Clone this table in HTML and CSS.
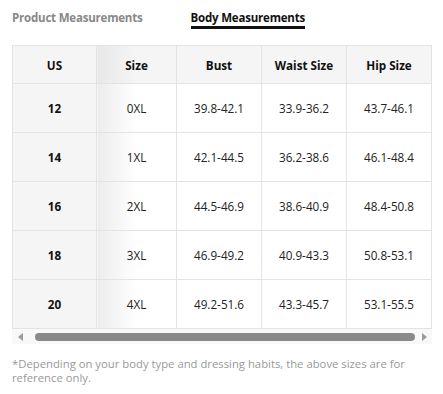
FILE: index.html
```html
<!DOCTYPE html>
<html lang="en">
<head>
    <meta charset="UTF-8">
    <title>Size Guide</title>
    <link rel="stylesheet" href="styles.css">
</head>
<body>
    <div class="tabs">
        <div class="tab">Product Measurements</div>
        <div class="tab active">Body Measurements</div>
    </div>

    <div class="table-wrap">
        <table class="size-table">
            <thead>
                <tr>
                    <th class="sticky">US</th>
                    <th class="shade">Size</th>
                    <th>Bust</th>
                    <th>Waist Size</th>
                    <th>Hip Size</th>
                </tr>
            </thead>
            <tbody>
                <tr><td class="sticky">12</td><td class="shade">0XL</td><td>39.8-42.1</td><td>33.9-36.2</td><td>43.7-46.1</td></tr>
                <tr><td class="sticky">14</td><td class="shade">1XL</td><td>42.1-44.5</td><td>36.2-38.6</td><td>46.1-48.4</td></tr>
                <tr><td class="sticky">16</td><td class="shade">2XL</td><td>44.5-46.9</td><td>38.6-40.9</td><td>48.4-50.8</td></tr>
                <tr><td class="sticky">18</td><td class="shade">3XL</td><td>46.9-49.2</td><td>40.9-43.3</td><td>50.8-53.1</td></tr>
                <tr><td class="sticky">20</td><td class="shade">4XL</td><td>49.2-51.6</td><td>43.3-45.7</td><td>53.1-55.5</td></tr>
            </tbody>
        </table>
        <div class="scrollbar">
            <span class="arrow left"></span>
            <span class="thumb"></span>
            <span class="arrow right"></span>
        </div>
    </div>

    <p class="note">*Depending on your body type and dressing habits, the above sizes are for reference only.</p>
</body>
</html>
```

FILE: styles.css
```css
* {
    margin: 0;
    padding: 0;
    box-sizing: border-box;
}

body {
    font-family: "Open Sans", "Noto Sans", sans-serif;
    background: #fff;
    color: #222;
    padding: 0 12px;
}

.tabs {
    display: flex;
    gap: 48px;
    padding-top: 10px;
    height: 45px;
}

.tab {
    font-size: 11.5px;
    font-weight: 700;
    color: #888;
    height: 19px;
    letter-spacing: -0.2px;
}

.tab.active {
    color: #111;
    border-bottom: 3px solid #111;
}

.table-wrap {
    width: 420px;
}

.size-table {
    width: 100%;
    border-collapse: collapse;
    table-layout: fixed;
    font-size: 11.7px;
}

.size-table th,
.size-table td {
    border: 1px solid #e3e3e3;
    text-align: center;
    font-weight: 400;
    color: #222;
}

.size-table th {
    height: 38px;
    font-weight: 700;
    color: #111;
    background: #f5f5f5;
}

.size-table td {
    height: 49px;
}

.size-table th:nth-child(1) { width: 84px; }
.size-table th:nth-child(2) { width: 80px; }

.size-table .sticky {
    background: #f5f5f5;
    font-weight: 700;
    color: #111;
}

.size-table td.shade {
    background: linear-gradient(to right, #ececec, #fff 50%);
}

.size-table th.shade {
    background: linear-gradient(to right, #e8e8e8, #f5f5f5 50%);
}

.scrollbar {
    display: flex;
    align-items: center;
    height: 15px;
    background: #f8f8f8;
    padding: 0 5px 0 6px;
}

.thumb {
    flex: 1;
    height: 8px;
    margin: 0 7px 0 12px;
    border-radius: 4px;
    background: #8a8a8a;
}

.arrow {
    width: 0;
    height: 0;
    border-top: 4px solid transparent;
    border-bottom: 4px solid transparent;
}

.arrow.left {
    border-right: 5px solid #9a9a9a;
}

.arrow.right {
    border-left: 5px solid #9a9a9a;
}

.note {
    margin-top: 13px;
    font-size: 11.3px;
    line-height: 14px;
    color: #999;
    width: 420px;
}
```
